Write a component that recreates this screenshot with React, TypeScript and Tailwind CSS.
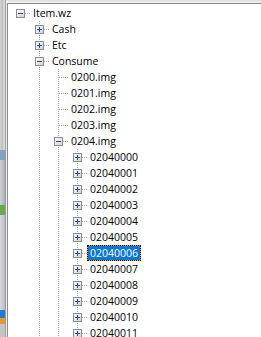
import React from "react";

type Node = {
  label: string;
  level: number;
  anc: boolean[]; // for each column < level: draw vertical line
  hasNext: boolean;
  root?: boolean;
  expandable?: boolean;
  expanded?: boolean;
  selected?: boolean;
};

const W = 19;
const H = 16;

const nodes: Node[] = [
  { label: "Item.wz", level: 0, anc: [], hasNext: false, root: true, expandable: true, expanded: true },
  { label: "Cash", level: 1, anc: [false], hasNext: true, expandable: true },
  { label: "Etc", level: 1, anc: [false], hasNext: true, expandable: true },
  { label: "Consume", level: 1, anc: [false], hasNext: true, expandable: true, expanded: true },
  { label: "0200.img", level: 2, anc: [false, true], hasNext: true },
  { label: "0201.img", level: 2, anc: [false, true], hasNext: true },
  { label: "0202.img", level: 2, anc: [false, true], hasNext: true },
  { label: "0203.img", level: 2, anc: [false, true], hasNext: true },
  { label: "0204.img", level: 2, anc: [false, true], hasNext: true, expandable: true, expanded: true },
  ...Array.from({ length: 12 }, (_, i) => ({
    label: "020400" + String(i).padStart(2, "0"),
    level: 3,
    anc: [false, true, true],
    hasNext: true,
    expandable: true,
    selected: i === 6,
  })),
];

const LINE = "#a0a0a0";

function Lines({ n }: { n: Node }) {
  const width = W * (n.level + 1);
  const L = n.level;
  const cx = L * W + 9;
  return (
    <svg width={width} height={H} className="shrink-0 block" shapeRendering="crispEdges">
      {n.anc.map((v, c) =>
        v ? (
          <line key={c} x1={c * W + 9.5} y1={0} x2={c * W + 9.5} y2={H} stroke={LINE} strokeDasharray="1 1" />
        ) : null
      )}
      {!n.root && (
        <line x1={cx + 0.5} y1={0} x2={cx + 0.5} y2={n.hasNext ? H : 9} stroke={LINE} strokeDasharray="1 1" />
      )}
      <line x1={cx + 1} y1={8.5} x2={width} y2={8.5} stroke={LINE} strokeDasharray="1 1" />
      {n.expandable && (
        <g>
          <defs>
            <linearGradient id="bx" x1="0" y1="0" x2="1" y2="1">
              <stop offset="0" stopColor="#ffffff" />
              <stop offset="1" stopColor="#cfcfcf" />
            </linearGradient>
          </defs>
          <rect x={cx - 3.5} y={4.5} width={8} height={8} fill="url(#bx)" stroke="#8e8e8e" />
          <line x1={cx - 2} y1={8.5} x2={cx + 3} y2={8.5} stroke="#2a4a86" />
          {!n.expanded && <line x1={cx + 0.5} y1={6} x2={cx + 0.5} y2={11} stroke="#2a4a86" />}
        </g>
      )}
    </svg>
  );
}

function Row({ n }: { n: Node }) {
  return (
    <div className="flex h-[16px] items-center">
      <Lines n={n} />
      {n.selected ? (
        <span className="h-[16px] bg-[#f39a35] border border-dotted border-black flex items-center">
          <span className="h-[14px] bg-[#0a78d6] text-white leading-[14px] px-[2px] whitespace-nowrap">{n.label}</span>
        </span>
      ) : (
        <span className="h-[16px] leading-[16px] px-[3px] text-black whitespace-nowrap">{n.label}</span>
      )}
    </div>
  );
}

export default function App() {
  return (
    <div
      className="w-[261px] h-[337px] flex overflow-hidden bg-white"
      style={{ fontFamily: '"Open Sans", "Noto Sans", sans-serif' }}
    >
      <div className="w-[5px] h-full flex flex-col shrink-0">
        <div className="h-[150px] bg-[linear-gradient(90deg,#d8d8d8_0,#bdbdbd_40%,#e4e4e4_100%)]" />
        <div className="h-[10px] bg-[#8aa0c0]" />
        <div className="h-[45px] bg-[linear-gradient(90deg,#d0d0d0,#a9b0b8)]" />
        <div className="h-[10px] bg-[#6aa84f]" />
        <div className="h-[95px] bg-[linear-gradient(90deg,#d8d8d8,#b8bcc4)]" />
        <div className="h-[8px] bg-[#1f7ad0]" />
        <div className="h-[6px] bg-[#e39a30]" />
        <div className="flex-1 bg-[#c4c4c4]" />
      </div>
      <div className="w-px h-full bg-[#9a9a9a] shrink-0" />
      <div className="w-px h-full bg-[#f0f0f0] shrink-0" />
      <div className="flex-1 flex flex-col min-w-0">
        <div className="h-[3px] bg-[linear-gradient(#dcdcdc,#f4f4f4)] shrink-0" />
        <div className="flex-1 border-t border-l border-[#8c8c8c] bg-white pt-px pl-[3px] text-[10.5px] overflow-hidden">
          {nodes.map((n, i) => (
            <Row key={i} n={n} />
          ))}
        </div>
      </div>
    </div>
  );
}
